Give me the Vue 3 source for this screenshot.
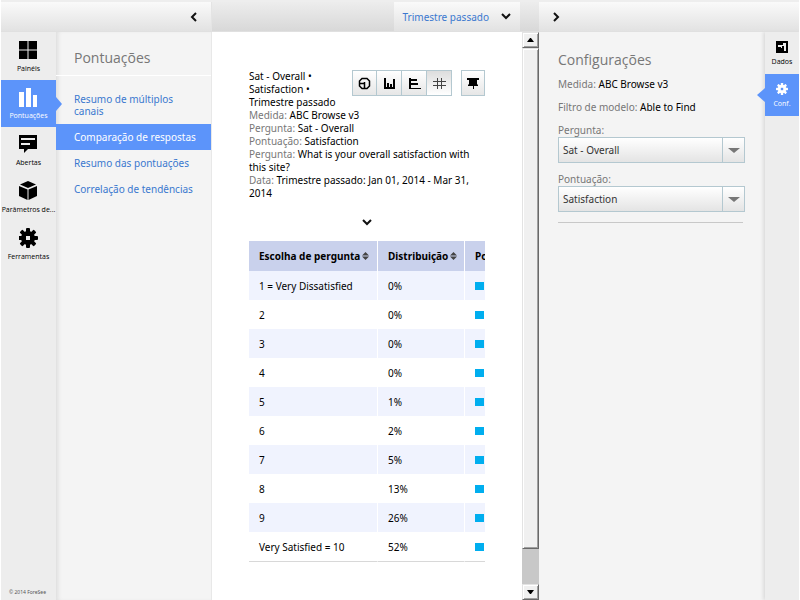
<script setup>
import { ref } from 'vue'

const navItems = [
  { id: 'dashboards', label: 'Painéis' },
  { id: 'scores', label: 'Pontuações' },
  { id: 'open', label: 'Abertas' },
  { id: 'benchmarks', label: 'Parâmetros de...' },
  { id: 'tools', label: 'Ferramentas' },
]
const activeNav = 'scores'

const reports = [
  'Resumo de múltiplos canais',
  'Comparação de respostas',
  'Resumo das pontuações',
  'Correlação de tendências',
]
const activeReport = 'Comparação de respostas'

const details = [
  { name: 'Medida:', value: 'ABC Browse v3' },
  { name: 'Pergunta:', value: 'Sat - Overall' },
  { name: 'Pontuação:', value: 'Satisfaction' },
  { name: 'Pergunta:', value: 'What is your overall satisfaction with this site?' },
  { name: 'Data:', value: 'Trimestre passado: Jan 01, 2014 - Mar 31, 2014' },
]

const rows = [
  ['1 = Very Dissatisfied', '0%'],
  ['2', '0%'],
  ['3', '0%'],
  ['4', '0%'],
  ['5', '1%'],
  ['6', '2%'],
  ['7', '5%'],
  ['8', '13%'],
  ['9', '26%'],
  ['Very Satisfied = 10', '52%'],
]

const views = [
  { id: 'pie', label: 'Pizza' },
  { id: 'columns', label: 'Colunas' },
  { id: 'bars', label: 'Barras' },
  { id: 'table', label: 'Tabela' },
]
const view = ref('table')
const question = ref('Sat - Overall')
const score = ref('Satisfaction')
const teeth = [0, 45, 90, 135]
</script>

<template>
  <div class="app">
    <header class="topbar">
      <div class="top-left">
        <button class="plain" aria-label="Recolher menu">
          <svg width="8" height="10" viewBox="0 0 8 10"><path d="M6 1 2 5l4 4" /></svg>
        </button>
      </div>
      <div class="top-main">
        <button class="period">
          Trimestre passado
          <svg width="10" height="7" viewBox="0 0 10 7"><path d="M1 1l4 4 4-4" /></svg>
        </button>
      </div>
      <div class="top-right">
        <button class="plain" aria-label="Recolher configurações">
          <svg width="8" height="10" viewBox="0 0 8 10"><path d="M2 1l4 4-4 4" /></svg>
        </button>
      </div>
    </header>

    <div class="body">
      <nav class="rail">
        <a
          v-for="item in navItems"
          :key="item.id"
          href="#"
          class="rail-item"
          :class="{ active: item.id === activeNav }"
        >
          <svg width="19" height="20" viewBox="1 0 19 20">
            <path v-if="item.id === 'dashboards'" d="M1 1h8.500v8.500H1zM10.500 1H19v8.500h-8.500zM1 10.500h8.500V19H1zM10.500 10.500H19V19h-8.500z" />
            <path v-else-if="item.id === 'scores'" d="M1 5h5v15H1zM8 1h5v19H8zM15 8h4v12h-4z" />
            <path v-else-if="item.id === 'open'" fill-rule="evenodd" d="M1 1h18v14h-9l-4 4v-4H1zM3 4v2h14V4zM3 9v2h9V9z" />
            <g v-else-if="item.id === 'benchmarks'">
              <path d="M10 0l8 3.500-8 3.500-8-3.500z" />
              <path d="M1 5l8.500 3.600V19L1 15zM19 5l-8.500 3.600V19L19 15z" />
            </g>
            <g v-else>
              <rect v-for="t in teeth" :key="t" x="8" y="0" width="4" height="20" rx="1" :transform="`rotate(${t} 10 10)`" />
              <circle cx="10" cy="10" r="7" />
              <rect class="hole" x="8" y="8" width="4" height="4" />
            </g>
          </svg>
          <span>{{ item.label }}</span>
        </a>
        <small class="copyright">© 2014 ForeSee</small>
      </nav>

      <nav class="submenu">
        <h2>Pontuações</h2>
        <ul>
          <li v-for="report in reports" :key="report" :class="{ active: report === activeReport }">
            <a href="#">{{ report }}</a>
          </li>
        </ul>
      </nav>

      <main class="content">
        <div class="summary-head">
          <h1>Sat - Overall • Satisfaction • Trimestre passado</h1>
          <div class="tools">
            <div class="views">
              <button
                v-for="v in views"
                :key="v.id"
                :class="{ pressed: v.id === view }"
                :aria-label="v.label"
                @click="view = v.id"
              >
                <svg width="13" height="13" viewBox="0 0 13 13" shape-rendering="crispEdges">
                  <path v-if="v.id === 'pie'" class="line" shape-rendering="auto" d="M4 1.500h5l2.500 2.500v5L9 11.500H4L1.500 9V4zM1.500 6.500h5v5M6.500 6.500V5" />
                  <path v-else-if="v.id === 'columns'" d="M1 1h2v9h9v2H1zM4 6h2v4H4zM7 7h2v3H7zM10 2h2v8h-2z" />
                  <path v-else-if="v.id === 'bars'" d="M1 1h2v10h10v1H1zM3 2h6v2H3zM3 6h7v2H3z" />
                  <path v-else class="hash" d="M4 1h1v11H4zM8 1h1v11H8zM0 4h13v1H0zM0 8h13v1H0z" />
                </svg>
              </button>
            </div>
            <button class="pin" aria-label="Fixar">
              <svg width="12" height="13" viewBox="0 0 12 13"><path d="M0 1h12v2h-2v4l1 1v1H7v3H6V9H1V8l1-1V3H0z" /></svg>
            </button>
          </div>
        </div>
        <p v-for="(d, i) in details" :key="i" class="detail">
          <span>{{ d.name }}</span> {{ d.value }}
        </p>
        <button class="plain expand" aria-label="Mostrar mais">
          <svg width="10" height="7" viewBox="0 0 10 7"><path d="M1 1l4 4 4-4" /></svg>
        </button>
        <div class="table-clip">
          <table>
            <thead>
              <tr>
                <th>Escolha de pergunta<svg class="sort" width="7" height="8" viewBox="0 0 7 8"><path d="M3.500 0L7 3.500H0zM0 4.500h7L3.500 8z" /></svg></th>
                <th>Distribuição<svg class="sort" width="7" height="8" viewBox="0 0 7 8"><path d="M3.500 0L7 3.500H0zM0 4.500h7L3.500 8z" /></svg></th>
                <th>Pontuação</th>
              </tr>
            </thead>
            <tbody>
              <tr v-for="row in rows" :key="row[0]">
                <td>{{ row[0] }}</td>
                <td>{{ row[1] }}</td>
                <td><i class="swatch"></i></td>
              </tr>
            </tbody>
          </table>
        </div>
      </main>

      <div class="scrollbar">
        <button aria-label="Rolar para cima"><svg width="7" height="4" viewBox="0 0 7 4"><path d="M3 0h1l3 4H0z" /></svg></button>
        <div class="thumb"></div>
        <div class="track"></div>
        <button aria-label="Rolar para baixo"><svg width="7" height="4" viewBox="0 0 7 4"><path d="M0 0h7L4 4H3z" /></svg></button>
      </div>

      <aside class="config">
        <h2>Configurações</h2>
        <p><span>Medida:</span> ABC Browse v3</p>
        <p><span>Filtro de modelo:</span> Able to Find</p>
        <label for="question">Pergunta:</label>
        <div class="select">
          <select id="question" v-model="question"><option>Sat - Overall</option></select>
          <i class="caret"></i>
        </div>
        <label for="score">Pontuação:</label>
        <div class="select">
          <select id="score" v-model="score"><option>Satisfaction</option></select>
          <i class="caret"></i>
        </div>
        <hr />
      </aside>

      <nav class="rail side">
        <a href="#" class="rail-item">
          <svg width="12" height="12" viewBox="0 0 12 12" shape-rendering="crispEdges"><path fill-rule="evenodd" d="M0 0h12v12H0zM2 4v2h3v1h1V5h2v5h2V2H7v2z" /></svg>
          <span>Dados</span>
        </a>
        <a href="#" class="rail-item active">
          <svg width="12" height="12" viewBox="0 0 20 20">
            <rect v-for="t in teeth" :key="t" x="8" y="0" width="4" height="20" rx="1" :transform="`rotate(${t} 10 10)`" />
            <circle cx="10" cy="10" r="7" />
            <rect class="hole" x="8" y="8" width="4" height="4" />
          </svg>
          <span>Conf.</span>
        </a>
      </nav>
    </div>
  </div>
</template>

<style>
body {
  background: #fff;
}
</style>

<style scoped>
.app {
  display: flex;
  flex-direction: column;
  box-sizing: border-box;
  min-height: 100vh;
  padding: 0 1px;
  font-family: 'Noto Sans', 'Open Sans', sans-serif;
  font-size: 10px;
  color: #000;
}
h1, h2, p, ul { margin: 0; padding: 0; font-weight: 400; }
ul { list-style: none; }
a { text-decoration: none; color: inherit; }
button, select { font: inherit; margin: 0; padding: 0; color: inherit; }
svg { display: block; flex: none; }

.topbar, .body {
  display: grid;
  grid-template-columns: 211px 1fr 260px;
}
.topbar {
  height: 32px;
  box-sizing: border-box;
  border-top: 2px solid #eee;
  border-bottom: 1px solid #e0e0e0;
}
.topbar path, .expand path { fill: none; stroke: #111; stroke-width: 2; }
.top-left, .top-right, .period { background: linear-gradient(#fafafa, #e2e2e2); }
.top-left, .top-right, .top-main { display: flex; align-items: center; }
.top-left { justify-content: flex-end; padding-right: 13px; border-right: 1px solid #e4e4e4; }
.top-main { justify-content: flex-end; align-items: stretch; padding-right: 19px; background: linear-gradient(#ededed, #d8d8d8); }
.top-right { padding-left: 13px; }
.plain { border: 0; background: none; }
.period {
  display: flex;
  align-items: center;
  gap: 12px;
  padding: 0 9px;
  border: 0;
  color: #3a78cf;
}

.body {
  flex: 1;
  grid-template-columns: 55px 156px 1fr 17px 226px 34px;
}
.rail { display: flex; flex-direction: column; background: #ededed; }
.rail-item {
  position: relative;
  display: flex;
  flex-direction: column;
  align-items: center;
  gap: 4px;
  box-sizing: border-box;
  height: 47px;
  padding-top: 7px;
  font-family: 'Open Sans', sans-serif;
  font-size: 7px;
  line-height: 10px;
  white-space: nowrap;
}
.rail-item:first-child { height: 48px; padding-top: 8px; }
.rail-item.active { background: #5c94fa; color: #fff; }
.rail-item.active::after {
  content: '';
  position: absolute;
  top: 50%;
  left: 100%;
  margin-top: -7px;
  border: 7px solid transparent;
  border-left: 6px solid #5c94fa;
  border-right: 0;
  z-index: 1;
}
.rail svg { fill: currentColor; }
.rail .hole { fill: #ededed; }
.rail .active .hole { fill: #5c94fa; }
.copyright { margin-top: auto; padding: 0 0 4px 8px; font-size: 5px; line-height: 8px; color: #555; white-space: nowrap; }

.submenu {
  background: #f4f4f4;
  border-right: 1px solid #e8e8e8;
  box-shadow: inset 4px 0 4px -2px #ddd;
}
.submenu h2 { padding: 15px 18px 6px; border-bottom: 1px solid #fff; }
h2 { font-family: 'Open Sans', sans-serif; font-size: 14px; line-height: 22px; color: #777; }
.submenu ul { padding-top: 10px; }
.submenu li { padding: 7px 10px 7px 18px; line-height: 12px; color: #3a78cf; }
.submenu li.active { background: #5c94fa; color: #fff; }

.content { padding: 38px 37px; min-width: 0; }
.summary-head { display: flex; justify-content: space-between; gap: 8px; }
h1 { flex: 1; font-size: 10px; line-height: 13px; }
.tools { display: flex; gap: 9px; }
.views { display: flex; }
.tools button {
  display: flex;
  align-items: center;
  justify-content: center;
  box-sizing: border-box;
  width: 25px;
  height: 26px;
  border: 1px solid #b4c8d0;
  background: linear-gradient(#fff, #e6e6e6);
}
.views button + button { border-left: 0; }
.tools .pin { width: 24px; }
.tools .pressed { background: linear-gradient(#ddd, #fff); }
.tools .hash { fill: #444; }
.tools .line { fill: none; stroke: #000; stroke-width: 1.500; }
.detail { line-height: 13px; }
.detail span, .config p span, .config label { color: #777; }
.expand { display: block; margin: 19px auto 15px; }
.table-clip { overflow: hidden; }
table { border-collapse: separate; border-spacing: 0; table-layout: fixed; width: 316px; }
th, td { box-sizing: border-box; padding: 0 0 0 10px; border-right: 1px solid #fff; text-align: left; white-space: nowrap; }
th:nth-child(1) { width: 129px; }
th:nth-child(2) { width: 87px; }
th { height: 30px; background: #c9d1ec; font-weight: 700; }
td { height: 29px; }
tbody tr:nth-child(odd) td { background: #f0f3fe; }
tbody tr:last-child td { height: 30px; border-bottom: 1px solid #d8d8d8; }
.sort { display: inline-block; margin-left: 2px; fill: #444; }
.swatch { display: block; width: 9px; height: 8px; background: #00aeef; }

.scrollbar { display: flex; flex-direction: column; }
.scrollbar button, .thumb {
  box-sizing: border-box;
  border: 1px solid;
  border-color: #e3e3e3 #696969 #696969 #e3e3e3;
  box-shadow: inset 1px 1px #fff, inset -1px -1px #a0a0a0;
  background: #f0f0f0;
}
.scrollbar button { display: flex; align-items: center; justify-content: center; height: 16px; }
.thumb { flex: 501; }
.track { flex: 35; background: #c8c8c8; }

.config { padding: 17px 20px 0 19px; background: #f4f4f4; }
.config h2 { margin-bottom: 6px; }
.config p { margin-bottom: 9px; line-height: 14px; }
.config label { display: block; line-height: 14px; }
.select { position: relative; margin-bottom: 9px; }
select {
  display: block;
  appearance: none;
  box-sizing: border-box;
  width: 100%;
  height: 26px;
  padding: 0 26px 0 4px;
  border: 1px solid #b4c8d0;
  border-radius: 0;
  background: linear-gradient(#fff, #e4e4e4);
  color: #333;
}
.caret {
  position: absolute;
  top: 0;
  right: 0;
  display: grid;
  place-items: center;
  box-sizing: border-box;
  width: 23px;
  height: 26px;
  border: 1px solid #b4c8d0;
  pointer-events: none;
}
.caret::after { content: ''; border: 6px solid transparent; border-top: 5px solid #777; border-bottom: 0; }
hr { margin: 10px 2px 0 0; border: 0; border-top: 1px solid #c8c8c8; }

.side { box-shadow: -2px 0 3px #ddd; }
.side .rail-item { height: 42px; padding-top: 9px; }
.side .rail-item.active::after {
  left: auto;
  right: 100%;
  border-left: 0;
  border-right: 8px solid #5c94fa;
}
</style>
